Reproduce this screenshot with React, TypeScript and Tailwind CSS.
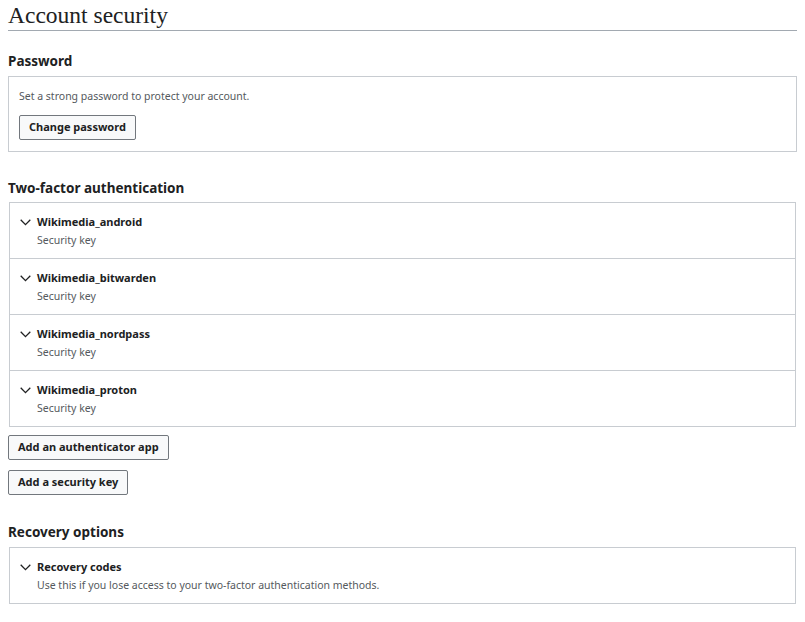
const keys = ["Wikimedia_android", "Wikimedia_bitwarden", "Wikimedia_nordpass", "Wikimedia_proton"];

function Chevron() {
  return (
    <svg width="11" height="7" viewBox="0 0 11 7" className="mt-[5px] shrink-0" fill="none">
      <polyline points="0.7,0.8 5.5,5.6 10.3,0.8" stroke="#202122" strokeWidth="1.3" />
    </svg>
  );
}

function Row({ title, sub, last }: { title: string; sub: string; last?: boolean }) {
  return (
    <div className={`flex items-start gap-[6px] pl-[10px] pt-[11px] ${last ? "h-[55px]" : "h-[56px] border-b border-[#c8ccd1]"}`}>
      <Chevron />
      <div>
        <div className="text-[11px] font-bold leading-[16px] text-[#202122]">{title}</div>
        <div className="text-[10.5px] leading-[20px] text-[#54595d]">{sub}</div>
      </div>
    </div>
  );
}

function Btn({ children }: { children: string }) {
  return (
    <button className="h-[25px] px-[9px] border border-[#72777d] bg-[#f8f9fa] rounded-[2px] text-[11px] font-bold text-[#202122]">
      {children}
    </button>
  );
}

export default function App() {
  return (
    <div className="px-[8px] pb-4 bg-white text-[#202122] font-['Noto_Sans',sans-serif]">
      <h1 className="font-['Liberation_Serif',serif] text-[23.5px] leading-[28px] pt-[1px] border-b border-[#a2a9b1] pb-[1px]">
        Account security
      </h1>

      <h2 className="text-[13.5px] font-bold mt-[20px] leading-[20px]">Password</h2>
      <div className="mt-[5px] border border-[#c8ccd1] px-[10px] pt-[11px] pb-[11px]">
        <p className="text-[10.5px] leading-[16px] text-[#54595d]">Set a strong password to protect your account.</p>
        <div className="mt-[11px] flex">
          <Btn>Change password</Btn>
        </div>
      </div>

      <h2 className="text-[13.5px] font-bold mt-[26px] leading-[20px]">Two-factor authentication</h2>
      <div className="mt-[4px] mx-[1px] border border-[#c8ccd1]">
        {keys.map((k, i) => (
          <Row key={k} title={k} sub="Security key" last={i === keys.length - 1} />
        ))}
      </div>
      <div className="mt-[8px] flex flex-col items-start gap-[10px]">
        <Btn>Add an authenticator app</Btn>
        <Btn>Add a security key</Btn>
      </div>

      <h2 className="text-[13.5px] font-bold mt-[27px] leading-[20px]">Recovery options</h2>
      <div className="mt-[5px] mx-[1px] border border-[#c8ccd1]">
        <Row title="Recovery codes" sub="Use this if you lose access to your two-factor authentication methods." last />
      </div>
    </div>
  );
}
